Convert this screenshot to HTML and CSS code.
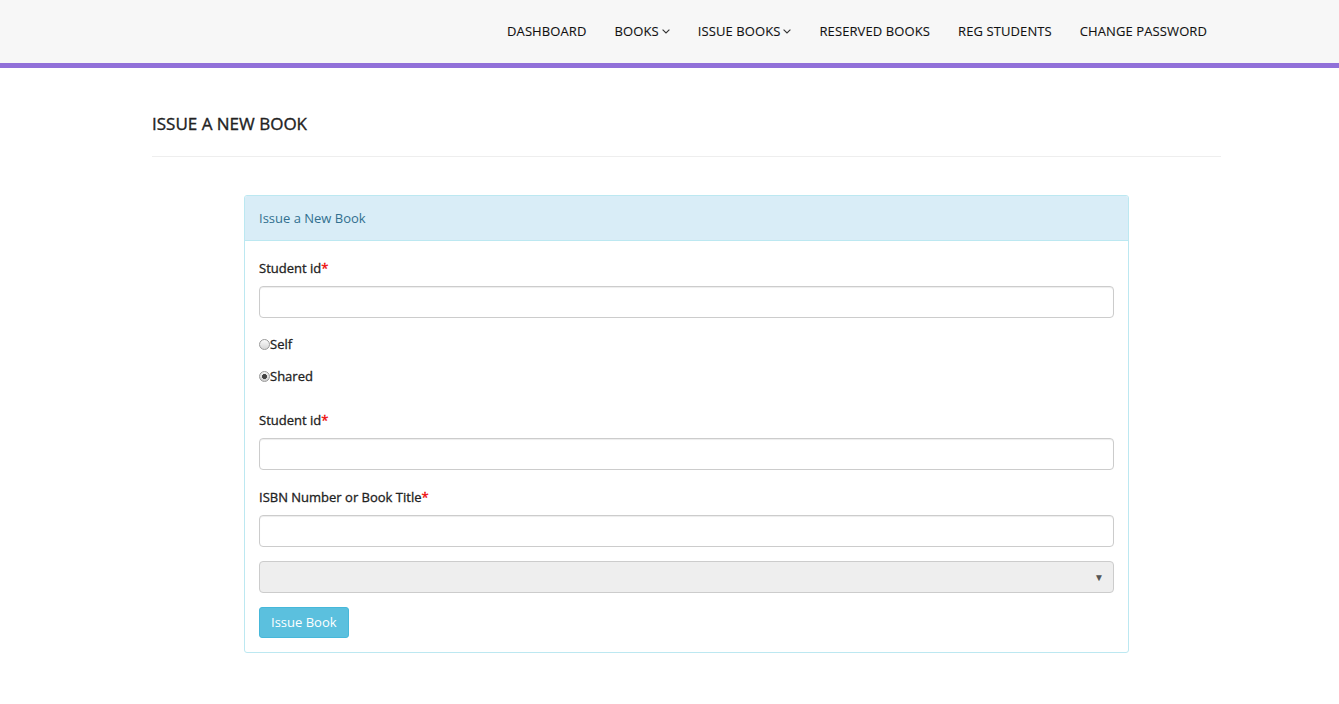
FILE: index.html
```html
<!DOCTYPE html>
<html>
<head>
<meta charset="utf-8">
<link rel="stylesheet" href="styles.css">
</head>
<body>
<header class="navbar">
  <nav class="nav">
    <a class="nav-item">DASHBOARD</a>
    <a class="nav-item">BOOKS <svg class="chev" viewBox="0 0 8 5" width="8" height="5"><path d="M0.6 0.6 L4 4 L7.4 0.6" fill="none" stroke="#333" stroke-width="1.1"/></svg></a>
    <a class="nav-item">ISSUE BOOKS <svg class="chev" viewBox="0 0 8 5" width="8" height="5"><path d="M0.6 0.6 L4 4 L7.4 0.6" fill="none" stroke="#333" stroke-width="1.1"/></svg></a>
    <a class="nav-item">RESERVED BOOKS</a>
    <a class="nav-item">REG STUDENTS</a>
    <a class="nav-item">CHANGE PASSWORD</a>
  </nav>
</header>
<main class="content">
  <h4 class="page-head">ISSUE A NEW BOOK</h4>
  <section class="panel">
    <div class="panel-heading">Issue a New Book</div>
    <div class="panel-body">
      <div class="form-group">
        <label class="label">Student id<span class="req">*</span></label>
        <input class="input" type="text">
      </div>
      <div class="radio-row"><span class="radio"></span>Self</div>
      <div class="radio-row last"><span class="radio checked"></span>Shared</div>
      <div class="form-group">
        <label class="label">Student id<span class="req">*</span></label>
        <input class="input" type="text">
      </div>
      <div class="form-group tight">
        <label class="label">ISBN Number or Book Title<span class="req">*</span></label>
        <input class="input" type="text">
      </div>
      <div class="select"><span class="caret">&#9660;</span></div>
      <button class="btn">Issue Book</button>
    </div>
  </section>
</main>
</body>
</html>
```
FILE: styles.css
```css
* { box-sizing: border-box; }
html, body { margin: 0; padding: 0; background: #fff; }
body {
  font-family: "Open Sans", "Noto Sans", sans-serif;
  font-size: 13px;
  color: #333;
}
.navbar {
  height: 68px;
  background: #f7f7f7;
  border-bottom: 5px solid #9170d9;
}
.nav {
  display: flex;
  justify-content: flex-end;
  width: 1083px;
  margin-left: 138px;
  height: 62px;
  align-items: center;
}
.nav-item {
  padding: 0 14px;
  font-size: 13px;
  letter-spacing: 0.1px;
  color: #111;
  line-height: 24px;
  display: flex;
  align-items: center;
  gap: 3px;
  -webkit-text-stroke: 0.1px #111;
}
.chev { display: block; margin-top: 1px; }
.content {
  width: 1069px;
  margin-left: 152px;
  padding-top: 44px;
}
.page-head {
  margin: 0;
  font-size: 17px;
  font-weight: 400;
  line-height: 24px;
  color: #222;
  -webkit-text-stroke: 0.35px #222;
  padding-bottom: 20px;
  border-bottom: 1px solid #eee;
}
.panel {
  width: 885px;
  margin: 38px 0 0 92px;
  border: 1px solid #bce8f1;
  border-radius: 3px;
}
.panel-heading {
  background: #d9edf7;
  color: #31708f;
  padding: 10px 14px;
  line-height: 24px;
  border-bottom: 1px solid #bce8f1;
  border-radius: 2px 2px 0 0;
}
.panel-body { padding: 15px 14px 14px; }
.form-group { margin-bottom: 15px; }
.form-group.tight { margin-bottom: 14px; }
.label {
  display: block;
  font-weight: 400;
  line-height: 24px;
  margin-bottom: 6px;
  color: #222;
  -webkit-text-stroke: 0.3px #222;
}
.req { color: #e00; -webkit-text-stroke: 0.3px #e00; }
.input {
  display: block;
  width: 100%;
  height: 32px;
  border: 1px solid #ccc;
  border-radius: 4px;
  background: #fff;
  font: inherit;
  box-shadow: inset 0 1px 1px rgba(0,0,0,.075);
}
.radio-row {
  display: flex;
  align-items: center;
  line-height: 24px;
  margin-bottom: 9px;
  color: #222;
  margin-top: -1px;
  -webkit-text-stroke: 0.3px #222;
}
.radio-row.last { margin-bottom: 20px; }
.radio {
  width: 11px;
  height: 11px;
  border-radius: 50%;
  border: 1px solid #9a9a9a;
  background: linear-gradient(#fafafa, #d6d6d6);
  display: inline-block;
  -webkit-text-stroke: 0;
}
.radio.checked {
  background: radial-gradient(circle, #444 0 2.2px, transparent 2.8px), linear-gradient(#f2f2f2, #cfcfcf);
}
.select {
  height: 32px;
  background: #eee;
  border: 1px solid #ccc;
  border-radius: 4px;
  margin-bottom: 14px;
  display: flex;
  justify-content: flex-end;
  align-items: center;
  padding-right: 9px;
}
.caret { font-size: 10px; color: #555; line-height: 1; }
.btn {
  display: block;
  height: 31px;
  padding: 0 11px 2px;
  background: #5bc0de;
  border: 1px solid #46b8da;
  border-radius: 3px;
  color: #fff;
  font: inherit;
  font-size: 13px;
}
```
